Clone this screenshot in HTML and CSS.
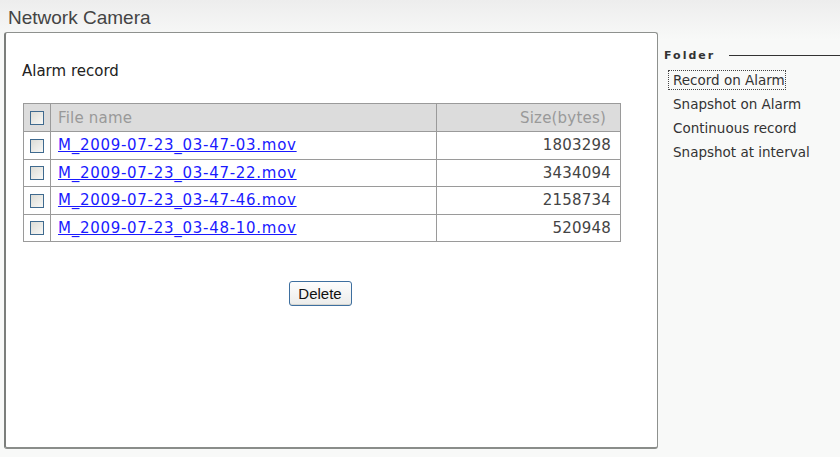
FILE: index.html
```html
<!DOCTYPE html>
<html lang="en">
<head>
    <meta charset="UTF-8">
    <title>Network Camera</title>
    <link rel="stylesheet" href="styles.css">
</head>
<body>

<div class="title">Network Camera</div>

<div class="page">
    <div class="content">
        <div class="caption">Alarm record</div>

        <table class="files">
            <tr>
                <th class="chk"><span class="box"></span></th>
                <th class="name">File name</th>
                <th class="size">Size(bytes)</th>
            </tr>
            <tr>
                <td class="chk"><span class="box"></span></td>
                <td class="name"><a href="#">M_2009-07-23_03-47-03.mov</a></td>
                <td class="size">1803298</td>
            </tr>
            <tr>
                <td class="chk"><span class="box"></span></td>
                <td class="name"><a href="#">M_2009-07-23_03-47-22.mov</a></td>
                <td class="size">3434094</td>
            </tr>
            <tr>
                <td class="chk"><span class="box"></span></td>
                <td class="name"><a href="#">M_2009-07-23_03-47-46.mov</a></td>
                <td class="size">2158734</td>
            </tr>
            <tr>
                <td class="chk"><span class="box"></span></td>
                <td class="name"><a href="#">M_2009-07-23_03-48-10.mov</a></td>
                <td class="size">520948</td>
            </tr>
        </table>

        <div class="actions">
            <button class="delete-btn">Delete</button>
        </div>
    </div>

    <!-- Folder list -->
    <div class="sidebar">
        <div class="folder-head">
            <span>Folder</span>
            <span class="rule"></span>
        </div>
        <ul class="folders">
            <li class="current"><span>Record on Alarm</span></li>
            <li><span>Snapshot on Alarm</span></li>
            <li><span>Continuous record</span></li>
            <li><span>Snapshot at interval</span></li>
        </ul>
    </div>
</div>

</body>
</html>
```

FILE: styles.css
```css
body {
    margin: 0;
    padding: 0;
    height: 457px;
    overflow: hidden;
    background: linear-gradient(#ededed, #f8f9f8 40px, #f8f9f8);
    font-family: 'DejaVu Sans', Verdana, sans-serif;
    color: #333;
}

.title {
    height: 32px;
    padding-left: 8px;
    font-family: 'Liberation Sans', Arial, sans-serif;
    font-size: 19px;
    line-height: 36px;
    color: #444;
}

.page {
    display: flex;
}

.content {
    width: 636px;
    height: 385px;
    margin-left: 4px;
    padding: 29px 0 0 15px;
    background-color: #fff;
    border: 1px solid #8e918e;
    border-left: 2px solid #7b7e7b;
    border-bottom: 2px solid #8a8d8a;
    border-radius: 3px;
}

.caption {
    font-size: 15px;
    color: #222;
    margin-left: 1px;
}

.files {
    width: 598px;
    margin-top: 23px;
    margin-left: 2px;
    border-collapse: collapse;
    font-size: 15px;
    letter-spacing: 0.2px;
}

.files th, .files td {
    border: 1px solid #9a9a9a;
    height: 26.5px;
    padding: 0;
}

.files th {
    height: 27px;
    background-color: #dcdcdc;
    font-weight: normal;
    color: #999;
}

.files .chk {
    width: 26px;
    text-align: center;
}

.files .name {
    text-align: left;
    padding-left: 7px;
}

.files .size {
    width: 169px;
    text-align: right;
    padding-right: 9px;
    color: #444;
}

.files th.size {
    padding-right: 14px;
    color: #999;
}

.files a {
    color: #1a1aff;
    letter-spacing: 0.72px;
}

.box {
    display: inline-block;
    width: 12px;
    height: 12px;
    vertical-align: middle;
    border: 1px solid #3f6a8f;
    background: linear-gradient(135deg, #dcdcd6, #f8f8f6);
}

.actions {
    width: 598px;
    margin-top: 39px;
    text-align: center;
}

.delete-btn {
    width: 63px;
    height: 25px;
    padding: 0;
    font-family: 'Liberation Sans', Arial, sans-serif;
    font-size: 15px;
    color: #111;
    background: linear-gradient(#fdfdfd, #ececea);
    border: 1px solid #3e6f9f;
    border-radius: 3px;
    box-shadow: inset 0 -1px 0 #d6d6d0;
}

.sidebar {
    flex: 1;
    padding-top: 17px;
    margin-left: 6px;
}

.folder-head {
    display: flex;
    align-items: center;
    font-size: 11px;
    font-weight: bold;
    letter-spacing: 2px;
    color: #333;
}

.rule {
    flex: 1;
    margin-left: 14px;
    border-top: 1px solid #333;
}

.folders {
    list-style: none;
    margin: 8px 0 0 0;
    padding: 0;
    font-size: 13.5px;
}

.folders li {
    height: 24px;
    line-height: 18px;
    padding-left: 4px;
}

.folders li span {
    display: inline-block;
    padding: 0 0 0 4px;
    border: 1px dotted transparent;
}

.folders li.current span {
    border-color: #444;
}
```
